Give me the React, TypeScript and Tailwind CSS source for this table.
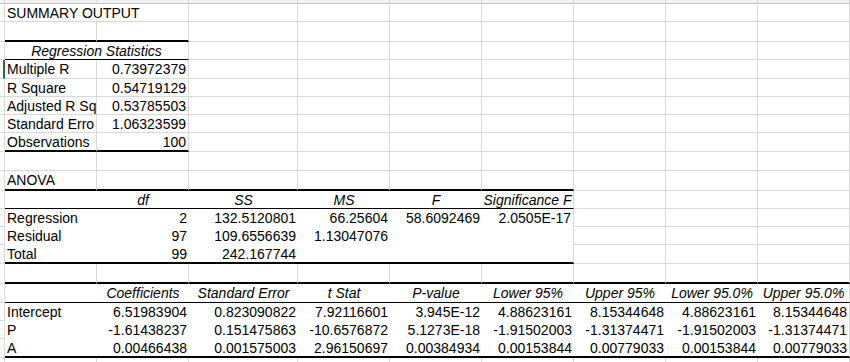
// Excel-style regression "SUMMARY OUTPUT" sheet
// Fixed column widths / row heights so the grid lines up with the sheet

type Align = 'left' | 'right' | 'center';
type Edge = 'grey' | 'thin' | 'thick' | 'none';

interface Cell {
  text?: string;
  align?: Align;
  italic?: boolean;
  span?: number;
}

interface Row {
  h: string;
  cells: Cell[];
  // bottom edge per sheet column (A..I)
  bottom?: Edge[];
  // hide vertical grid lines up to this column index (white-filled table body)
  noGridTo?: number;
  active?: boolean;
}

const cols = 9;

const fill = (edge: Edge, from: number, to: number, rest: Edge = 'grey'): Edge[] =>
  Array.from({ length: cols }, (_, i) => (i >= from && i <= to ? edge : rest));

const L = (text: string): Cell => ({ text, align: 'left' });
const R = (text: string): Cell => ({ text, align: 'right' });
const H = (text: string): Cell => ({ text, align: 'center', italic: true });
const E: Cell = {};

const pad = (cells: Cell[]) => {
  const used = cells.reduce((n, c) => n + (c.span ?? 1), 0);
  return [...cells, ...Array.from({ length: cols - used }, () => E)];
};

const rows: Row[] = [
  { h: 'h-[18px]', cells: pad([{ text: 'SUMMARY OUTPUT', align: 'left', span: 2 }]) },
  { h: 'h-[20px]', cells: pad([]), bottom: fill('thick', 0, 1) },
  {
    h: 'h-[18px]',
    cells: pad([{ text: 'Regression Statistics', align: 'center', italic: true, span: 2 }]),
    bottom: fill('thin', 0, 1),
  },
  { h: 'h-[19px]', cells: pad([L('Multiple R'), R('0.73972379')]), active: true },
  { h: 'h-[18px]', cells: pad([L('R Square'), R('0.54719129')]) },
  { h: 'h-[18px]', cells: pad([L('Adjusted R Sq'), R('0.53785503')]) },
  { h: 'h-[18px]', cells: pad([L('Standard Erro'), R('1.06323599')]) },
  { h: 'h-[19px]', cells: pad([L('Observations'), R('100')]), bottom: fill('thick', 0, 1) },
  { h: 'h-[19px]', cells: pad([]) },
  { h: 'h-[20px]', cells: pad([L('ANOVA')]), bottom: fill('thick', 0, 5) },
  {
    h: 'h-[18px]',
    cells: pad([E, H('df'), H('SS'), H('MS'), H('F'), H('Significance F')]),
    bottom: fill('thin', 0, 5),
    noGridTo: 4,
  },
  {
    h: 'h-[18px]',
    cells: pad([L('Regression'), R('2'), R('132.5120801'), R('66.25604'), R('58.6092469'), R('2.0505E-17')]),
    bottom: fill('none', 0, 5),
    noGridTo: 4,
  },
  {
    h: 'h-[18px]',
    cells: pad([L('Residual'), R('97'), R('109.6556639'), R('1.13047076')]),
    bottom: fill('none', 0, 5),
    noGridTo: 4,
  },
  {
    h: 'h-[19px]',
    cells: pad([L('Total'), R('99'), R('242.167744')]),
    bottom: fill('thick', 0, 5),
    noGridTo: 4,
  },
  { h: 'h-[20px]', cells: pad([]), bottom: fill('thick', 0, 8) },
  {
    h: 'h-[19px]',
    cells: [
      E,
      H('Coefficients'),
      H('Standard Error'),
      H('t Stat'),
      H('P-value'),
      H('Lower 95%'),
      H('Upper 95%'),
      H('Lower 95.0%'),
      H('Upper 95.0%'),
    ],
    bottom: fill('thin', 0, 8),
    noGridTo: 7,
  },
  {
    h: 'h-[18px]',
    cells: [
      L('Intercept'),
      R('6.51983904'),
      R('0.823090822'),
      R('7.92116601'),
      R('3.945E-12'),
      R('4.88623161'),
      R('8.15344648'),
      R('4.88623161'),
      R('8.15344648'),
    ],
    bottom: fill('none', 0, 8),
    noGridTo: 7,
  },
  {
    h: 'h-[18px]',
    cells: [
      L('P'),
      R('-1.61438237'),
      R('0.151475863'),
      R('-10.6576872'),
      R('5.1273E-18'),
      R('-1.91502003'),
      R('-1.31374471'),
      R('-1.91502003'),
      R('-1.31374471'),
    ],
    bottom: fill('none', 0, 8),
    noGridTo: 7,
  },
  {
    h: 'h-[19px]',
    cells: [
      L('A'),
      R('0.00466438'),
      R('0.001575003'),
      R('2.96150697'),
      R('0.00384934'),
      R('0.00153844'),
      R('0.00779033'),
      R('0.00153844'),
      R('0.00779033'),
    ],
    bottom: fill('thick', 0, 8),
    noGridTo: 7,
  },
  { h: 'h-[6px]', cells: pad([]) },
];

const edgeClass: Record<Edge, string> = {
  grey: 'border-b border-b-[#d9d9d9]',
  thin: 'border-b border-b-black',
  thick: 'border-b-2 border-b-black',
  none: '',
};

const alignClass: Record<Align, string> = {
  left: 'justify-start',
  right: 'justify-end',
  center: 'justify-center',
};

function SheetRow({ row }: { row: Row }) {
  let col = 0;
  return (
    <>
      <div
        className={`${row.h} border-b border-b-[#d9d9d9] ${
          row.active ? 'border-r-2 border-r-[#1e7145]' : 'border-r border-r-[#d9d9d9]'
        }`}
      />
      {row.cells.map((cell, i) => {
        const span = cell.span ?? 1;
        const last = col + span - 1;
        const bottom = row.bottom?.[col] ?? 'grey';
        const hideRight = row.noGridTo !== undefined && last <= row.noGridTo;
        col += span;
        return (
          <div
            key={i}
            className={`${row.h} ${span === 2 ? 'col-span-2' : ''} flex items-center overflow-hidden whitespace-nowrap px-[2px] ${
              hideRight ? '' : 'border-r border-r-[#d9d9d9]'
            } ${edgeClass[bottom]} ${alignClass[cell.align ?? 'left']} ${cell.italic ? 'italic' : ''}`}
          >
            {cell.text}
          </div>
        );
      })}
    </>
  );
}

export default function App() {
  return (
    <div className="w-[850px] h-[362px] overflow-hidden bg-white text-black text-[14px] leading-none font-['Liberation_Sans',Arial,sans-serif]">
      <div className="grid grid-cols-[5px_92px_92px_109px_92px_92px_92px_92px_92px_92px]">
        {/* column header strip, scrolled mostly out of view */}
        {Array.from({ length: cols + 1 }, (_, i) => (
          <div key={i} className="h-[4px] bg-[#f2f2f2] border-b border-b-[#c4c4c4] border-r border-r-[#d9d9d9]" />
        ))}
        {rows.map((row, i) => (
          <SheetRow key={i} row={row} />
        ))}
      </div>
    </div>
  );
}
